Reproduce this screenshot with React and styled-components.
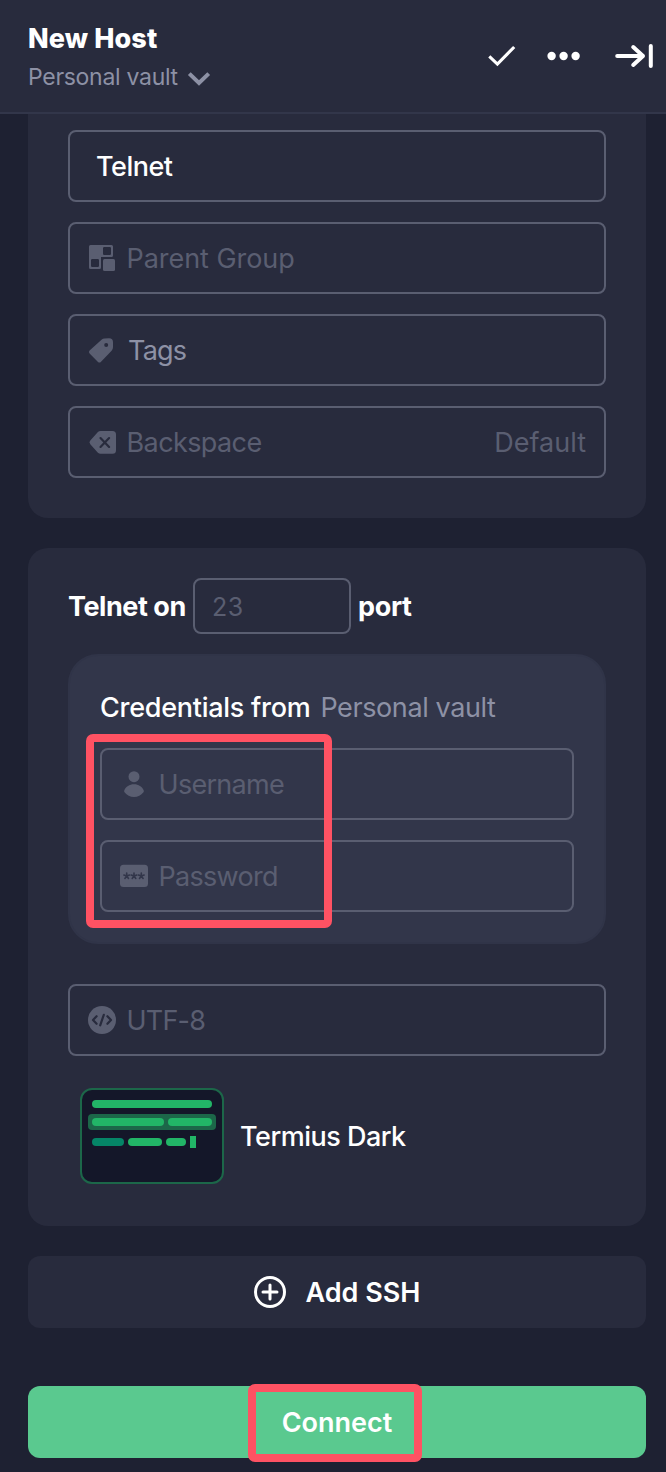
import React from 'react';
import styled, { createGlobalStyle } from 'styled-components';

const c = {
  page: '#1e2132',
  card: '#282b3d',
  raised: '#32364a',
  line: '#5a5e71',
  faint: '#5a5e71',
  muted: '#8d91a5',
  white: '#ffffff',
  green: '#5ac98f',
  mark: '#ff5263',
};

const GlobalStyle = createGlobalStyle`
  * { box-sizing: border-box; }
  body { margin: 0; background: ${c.page}; }
`;

const Screen = styled.div`
  width: 666px;
  height: 1472px;
  overflow: hidden;
  display: flex;
  flex-direction: column;
  background: ${c.page};
  font-family: Inter, 'Liberation Sans', sans-serif;
`;

const Header = styled.header`
  height: 114px;
  flex: none;
  display: flex;
  justify-content: space-between;
  padding: 22px 12px 0 28px;
  background: ${c.card};
  border-bottom: 2px solid ${c.raised};
`;

const Titles = styled.div`
  display: flex;
  flex-direction: column;
  gap: 6px;
`;

const Text = styled.span`
  font-size: ${(p) => p.$size || 27}px;
  font-weight: ${(p) => p.$weight || 400};
  line-height: ${(p) => p.$leading || 33}px;
  letter-spacing: ${(p) => p.$track || 0}px;
  color: ${(p) => c[p.$tone || 'faint']};
  white-space: nowrap;
`;

const VaultPicker = styled.div`
  display: flex;
  align-items: center;
  gap: 9px;

  svg {
    margin-top: 2px;
  }
`;

const Actions = styled.div`
  display: flex;
  align-items: center;
  height: 68px;
`;

const Action = styled.span`
  display: flex;
  margin-left: ${(p) => p.$gap || 0}px;
`;

const Body = styled.main`
  display: flex;
  flex-direction: column;
  padding: 0 20px 0 28px;
`;

const Card = styled.section`
  display: flex;
  flex-direction: column;
  padding: ${(p) => (p.$clipped ? '16px 40px 40px' : '30px 40px 42px')};
  gap: 20px;
  background: ${c.card};
  border-radius: ${(p) => (p.$clipped ? '0 0 20px 20px' : '20px')};
  margin-bottom: 30px;
`;

const Field = styled.div`
  height: 72px;
  display: flex;
  align-items: center;
  padding: 1px 18px 0 ${(p) => (p.$plain ? 26 : 18)}px;
  border: 2px solid ${c.line};
  border-radius: 8px;
`;

const IconSlot = styled.span`
  width: 28px;
  height: 28px;
  margin-right: ${(p) => p.$gap || 10.5}px;
  margin-top: -1px;
  flex: none;
  display: flex;
`;

const Trailing = styled.span`
  margin-left: auto;
  display: flex;
`;

const PortRow = styled.div`
  display: flex;
  height: 56px;
`;

const PortLabel = styled.div`
  width: ${(p) => p.$w || 'auto'};
  padding-top: 12px;
  display: flex;
`;

const PortInput = styled.div`
  width: 158px;
  height: 56px;
  margin-right: 7px;
  padding: 2px 0 0 17px;
  display: flex;
  align-items: center;
  border: 2px solid ${c.line};
  border-radius: 8px;
`;

const Credentials = styled.div`
  position: relative;
  height: 290px;
  margin-bottom: 20px;
  padding: 35px 30px 0;
  display: flex;
  flex-direction: column;
  gap: 20px;
  background: ${c.raised};
  border: 2px solid #303448;
  border-radius: 30px;
`;

const CredentialsTitle = styled.div`
  display: flex;
  height: 33px;
  margin-bottom: 4px;
  gap: 10px;
`;

const Highlight = styled.div`
  position: absolute;
  left: ${(p) => p.$x}px;
  top: ${(p) => p.$y}px;
  width: ${(p) => p.$w}px;
  height: ${(p) => p.$h}px;
  border: 8px solid ${c.mark};
  border-radius: 7px;
`;

const ThemeRow = styled.div`
  display: flex;
  gap: 16px;
  margin: 12px 0 0 12px;
`;

const ThemeName = styled.div`
  padding-top: 32px;
  display: flex;
`;

const Preview = styled.div`
  width: 144px;
  height: 96px;
  padding: 10px 6px;
  display: flex;
  flex-direction: column;
  gap: 6px;
  background: #141729;
  border: 2px solid #1c6749;
  border-radius: 12px;
`;

const PreviewLine = styled.div`
  display: flex;
  align-items: center;
  gap: 4px;
  height: ${(p) => p.$h}px;
  padding: 0 4px;
  border-radius: 4px;
  background: ${(p) => (p.$selected ? '#1c6749' : 'transparent')};
`;

const Dash = styled.span`
  width: ${(p) => p.$w}px;
  height: 8px;
  border-radius: 4px;
  background: ${(p) => (p.$dim ? '#058567' : '#22b567')};
`;

const Cursor = styled.span`
  width: 6px;
  height: 12px;
  background: #22b567;
`;

const Button = styled.div`
  position: relative;
  height: 72px;
  display: flex;
  align-items: center;
  justify-content: center;
  gap: 20px;
  padding-top: 1px;
  border-radius: 12px;
  background: ${(p) => (p.$primary ? c.green : c.card)};
  margin-bottom: ${(p) => (p.$primary ? 0 : 58)}px;
`;

const PlusSlot = styled.span`
  display: flex;
  margin-top: -1px;
`;

const Chevron = () => (
  <svg width="24" height="16" viewBox="0 0 24 16" fill="none" stroke={c.muted} strokeWidth="4">
    <path d="M2.300 3.600 12 13 21.700 3.600" />
  </svg>
);

const Check = () => (
  <svg width="28" height="22" viewBox="0 0 28 22" fill="none" stroke="#fff" strokeWidth="3.1">
    <path d="M1.3 11.3 9.4 19 26.2 2" />
  </svg>
);

const Dots = () => (
  <svg width="33" height="10" viewBox="0 0 33 10" fill="#fff">
    <circle cx="4.6" cy="5" r="4.2" />
    <circle cx="16.6" cy="5" r="4.2" />
    <circle cx="28.6" cy="5" r="4.2" />
  </svg>
);

const Collapse = () => (
  <svg width="40" height="26" viewBox="0 0 40 26" fill="none" stroke="#fff" strokeWidth="4" strokeLinecap="round" strokeLinejoin="round">
    <path d="M3.2 13H29M19.2 4 29 13 19.2 22M36.8 3V23" />
  </svg>
);

const GroupIcon = () => (
  <svg width="28" height="28" viewBox="0 0 28 28">
    <path
      fill={c.line}
      fillRule="evenodd"
      d="M2.5 1H23.5A1.5 1.5 0 0 1 25 2.500V11.500A1.500 1.500 0 0 1 23.500 13H13V23.500A1.500 1.500 0 0 1 11.500 25H2.500A1.500 1.500 0 0 1 1 23.500V2.500A1.500 1.500 0 0 1 2.500 1ZM16.200 3A1.200 1.200 0 0 0 15 4.200V9.800A1.200 1.200 0 0 0 16.200 11H21.800A1.200 1.200 0 0 0 23 9.800V4.200A1.200 1.200 0 0 0 21.800 3ZM4.200 15A1.200 1.200 0 0 0 3 16.200V21.800A1.200 1.200 0 0 0 4.200 23H9.800A1.200 1.200 0 0 0 11 21.800V16.200A1.200 1.200 0 0 0 9.800 15Z"
    />
    <rect x="15" y="15" width="12" height="12" rx="1.5" fill={c.line} />
  </svg>
);

const TagIcon = () => (
  <svg width="28" height="28" viewBox="0 -1.300 28 28">
    <path
      fill={c.line}
      fillRule="evenodd"
      d="M13.800 2.200Q14.800 1.200 16.500 1.100L21 1Q25 1 25 5V10Q25 12 23.600 13.400L12.800 24.600Q11.400 26 10 24.600L1.600 16.300Q.1 14.800 1.600 13.300ZM18.200 5.800A2 2 0 1 0 18.200 9.800 2 2 0 1 0 18.200 5.800Z"
    />
  </svg>
);

const BackspaceIcon = () => (
  <svg width="28" height="28" viewBox="0 0 28 28">
    <path fill={c.line} d="M12.500 3H24.500A3.500 3.500 0 0 1 28 6.500V22.300A3.500 3.500 0 0 1 24.500 25.800H12.500Q11 25.800 9.900 24.700L2.300 16.200Q.6 14.400 2.300 12.600L9.900 4.100Q11 3 12.500 3Z" />
    <path d="M12.500 10.100 21.100 18.900M21.100 10.100 12.500 18.900" stroke={c.card} strokeWidth="2.200" strokeLinecap="round" />
  </svg>
);

const UserIcon = () => (
  <svg width="28" height="28" viewBox="0 0 28 28" fill={c.line}>
    <circle cx="14" cy="6.700" r="5.500" />
    <path d="M4.300 20.200C5.800 16.700 9.500 14.200 14 14.200S22.200 16.700 23.700 20.200Q24.200 21.400 23.300 22.400C21.200 25 17.800 27 14 27S6.800 25 4.700 22.400Q3.800 21.400 4.300 20.200Z" />
  </svg>
);

const Star = ({ x }) => (
  <path
    transform={`translate(${x} 14)`}
    d="M0 0V-2.900M0 0 2.800-.9M0 0 1.800 2.400M0 0-1.800 2.400M0 0-2.800-.9"
    stroke={c.raised}
    strokeWidth="1.600"
    strokeLinecap="round"
  />
);

const PasswordIcon = () => (
  <svg width="28" height="28" viewBox="0 0 28 28">
    <rect x="0" y="2.700" width="28" height="22.300" rx="3.500" fill={c.line} />
    <Star x={6.700} />
    <Star x={14} />
    <Star x={21.300} />
  </svg>
);

const CodeIcon = () => (
  <svg width="28" height="28" viewBox="0 0 28 28">
    <circle cx="14" cy="14" r="14" fill={c.line} />
    <path
      d="M8.600 10.200 5 14 8.600 17.800M19.400 10.200 23 14 19.400 17.800M15.800 8.800 12.200 19.300"
      fill="none"
      stroke={c.card}
      strokeWidth="2.200"
      strokeLinecap="round"
      strokeLinejoin="round"
    />
  </svg>
);

const PlusIcon = () => (
  <svg width="32" height="32" viewBox="0 0 32 32" fill="none" stroke="#fff" strokeWidth="3">
    <circle cx="16" cy="16" r="14.500" />
    <path d="M9 16H23M16 9V23" strokeLinecap="round" />
  </svg>
);

export default function App() {
  return (
    <>
      <GlobalStyle />
      <Screen>
        <Header>
          <Titles>
            <Text $size={27} $weight={800} $track={0.1} $tone="white">New Host</Text>
            <VaultPicker>
              <Text $size={23} $leading={32} $track={-0.29} $tone="muted">Personal vault</Text>
              <Chevron />
            </VaultPicker>
          </Titles>
          <Actions>
            <Action><Check /></Action>
            <Action $gap={31}><Dots /></Action>
            <Action $gap={34}><Collapse /></Action>
          </Actions>
        </Header>
        <Body>
          <Card $clipped>
            <Field $plain><Text $weight={500} $track={-0.5} $tone="white">Telnet</Text></Field>
            <Field>
              <IconSlot><GroupIcon /></IconSlot>
              <Text $track={-0.05}>Parent Group</Text>
            </Field>
            <Field>
              <IconSlot $gap={12}><TagIcon /></IconSlot>
              <Text $track={-0.8} $tone="muted">Tags</Text>
            </Field>
            <Field>
              <IconSlot><BackspaceIcon /></IconSlot>
              <Text $track={-0.6}>Backspace</Text>
              <Trailing><Text>Default</Text></Trailing>
            </Field>
          </Card>
          <Card>
            <PortRow>
              <PortLabel $w="125px"><Text $weight={700} $track={-0.45} $tone="white">Telnet on</Text></PortLabel>
              <PortInput><Text $size={25} $track={0.4}>23</Text></PortInput>
              <PortLabel><Text $weight={700} $track={-0.35} $tone="white">port</Text></PortLabel>
            </PortRow>
            <Credentials>
              <CredentialsTitle>
                <Text $weight={500} $track={-0.27} $tone="white">Credentials from</Text>
                <Text $track={-0.4} $tone="muted">Personal vault</Text>
              </CredentialsTitle>
              <Field>
                <IconSlot><UserIcon /></IconSlot>
                <Text $track={-0.7}>Username</Text>
              </Field>
              <Field>
                <IconSlot><PasswordIcon /></IconSlot>
                <Text $track={-0.7}>Password</Text>
              </Field>
              <Highlight $x={16} $y={78} $w={246} $h={194} />
            </Credentials>
            <Field>
              <IconSlot><CodeIcon /></IconSlot>
              <Text $track={-0.8}>UTF-8</Text>
            </Field>
            <ThemeRow>
              <Preview>
                <PreviewLine $h={8}><Dash $w={120} /></PreviewLine>
                <PreviewLine $h={16} $selected><Dash $w={72} /><Dash $w={44} /></PreviewLine>
                <PreviewLine $h={12}><Dash $w={32} $dim /><Dash $w={34} /><Dash $w={20} /><Cursor /></PreviewLine>
              </Preview>
              <ThemeName><Text $weight={500} $track={-0.5} $tone="white">Termius Dark</Text></ThemeName>
            </ThemeRow>
          </Card>
          <Button>
            <PlusSlot><PlusIcon /></PlusSlot>
            <Text $weight={600} $tone="white">Add SSH</Text>
          </Button>
          <Button $primary>
            <Text $weight={600} $tone="white">Connect</Text>
            <Highlight $x={220} $y={-2} $w={174} $h={78} />
          </Button>
        </Body>
      </Screen>
    </>
  );
}
